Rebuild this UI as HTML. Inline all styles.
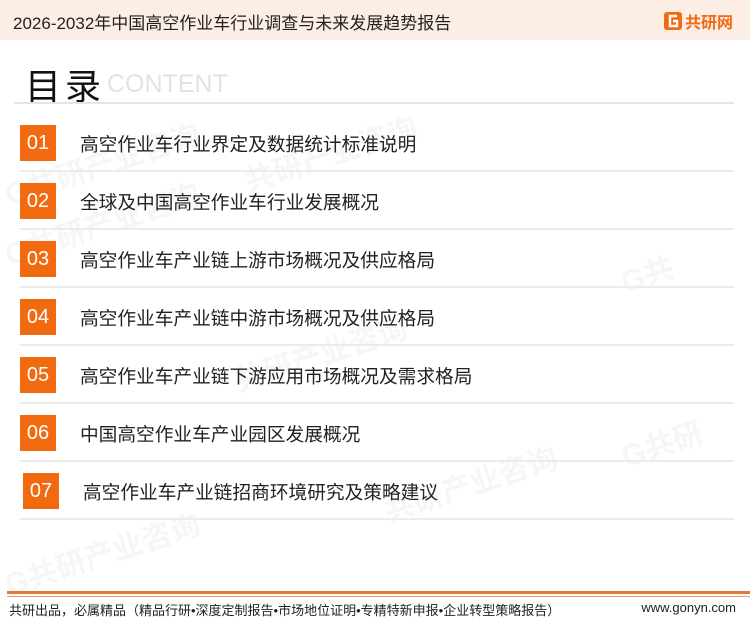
<!DOCTYPE html>
<html><head><meta charset="utf-8"><style>
*{margin:0;padding:0;box-sizing:border-box}
body{width:750px;height:622px;background:#fff;position:relative;overflow:hidden;font-family:"Liberation Sans","Noto Sans CJK SC",sans-serif;color:#222}
.hdr{position:absolute;left:0;top:0;width:750px;height:40px;background:#fcede5}
.hdr .t{position:absolute;left:13px;top:9px;font-size:17px;color:#222;white-space:nowrap}
.logo{position:absolute;left:664px;top:9px;font-size:16px;font-weight:bold;color:#f26a10;display:flex;align-items:center}
.ml{position:absolute;left:25px;top:58px;font-size:36px;color:#111;letter-spacing:4px}
.ct{position:absolute;left:107px;top:70px;font-size:25px;color:#e2e2e2}
.div{position:absolute;left:14px;top:102px;width:720px;height:2px;background:#e4e4e4}
.row{position:absolute;left:20px;height:36px}
.row b{position:absolute;left:0;top:0;width:36px;height:36px;background:#f26a10;color:#fff;font-weight:normal;font-size:20px;text-align:center;line-height:36px}
.row span{position:absolute;left:60px;top:5px;font-size:18.7px;white-space:nowrap;color:#222}
.sep{position:absolute;left:20px;width:714px;height:2px;background:#ececec}
.wm{position:absolute;color:#f6f6f6;font-size:30px;font-weight:bold;transform:rotate(-18deg);white-space:nowrap}
.f1{position:absolute;left:7px;top:591px;width:743px;height:3px;background:#e07a3a}
.f2{position:absolute;left:7px;top:596px;width:743px;height:1px;background:#e8a070}
.ft{position:absolute;left:9px;top:600px;font-size:13px;color:#222}
.fr{position:absolute;right:14px;top:600px;font-size:13px;color:#222}
</style></head><body>
<div class="wm" style="left:0;top:140px">G共研产业咨询</div>
<div class="wm" style="left:240px;top:130px">共研产业咨询</div>
<div class="wm" style="left:0;top:200px">G共研产业咨询</div>
<div class="wm" style="left:230px;top:330px">共研产业咨询</div>
<div class="wm" style="left:380px;top:460px">共研产业咨询</div>
<div class="wm" style="left:0;top:530px">G共研产业咨询</div>
<div class="wm" style="left:620px;top:250px">G共</div>
<div class="wm" style="left:620px;top:420px">G共研</div>
<div class="hdr"><div class="t">2026-2032年中国高空作业车行业调查与未来发展趋势报告</div>
<div class="logo"><svg width="18" height="18" viewBox="0 0 18 18" style="margin-right:3px"><rect width="18" height="18" rx="3" fill="#f26a10"/><path d="M13 4H6v10h7V9H9" stroke="#fff" stroke-width="2.4" fill="none"/></svg>共研网</div></div>
<div class="ml">目录</div><div class="ct">CONTENT</div>
<div class="div"></div>
<div class="row" style="top:125px"><b>01</b><span>高空作业车行业界定及数据统计标准说明</span></div>
<div class="sep" style="top:170px"></div>
<div class="row" style="top:183px"><b>02</b><span>全球及中国高空作业车行业发展概况</span></div>
<div class="sep" style="top:228px"></div>
<div class="row" style="top:241px"><b>03</b><span>高空作业车产业链上游市场概况及供应格局</span></div>
<div class="sep" style="top:286px"></div>
<div class="row" style="top:299px"><b>04</b><span>高空作业车产业链中游市场概况及供应格局</span></div>
<div class="sep" style="top:344px"></div>
<div class="row" style="top:357px"><b>05</b><span>高空作业车产业链下游应用市场概况及需求格局</span></div>
<div class="sep" style="top:402px"></div>
<div class="row" style="top:415px"><b>06</b><span>中国高空作业车产业园区发展概况</span></div>
<div class="sep" style="top:460px"></div>
<div class="row" style="top:473px;left:23px"><b>07</b><span>高空作业车产业链招商环境研究及策略建议</span></div>
<div class="sep" style="top:518px"></div>
<div class="f1"></div><div class="f2"></div>
<div class="ft">共研出品，必属精品（精品行研•深度定制报告•市场地位证明•专精特新申报•企业转型策略报告）</div>
<div class="fr">www.gonyn.com</div>
</body></html>
